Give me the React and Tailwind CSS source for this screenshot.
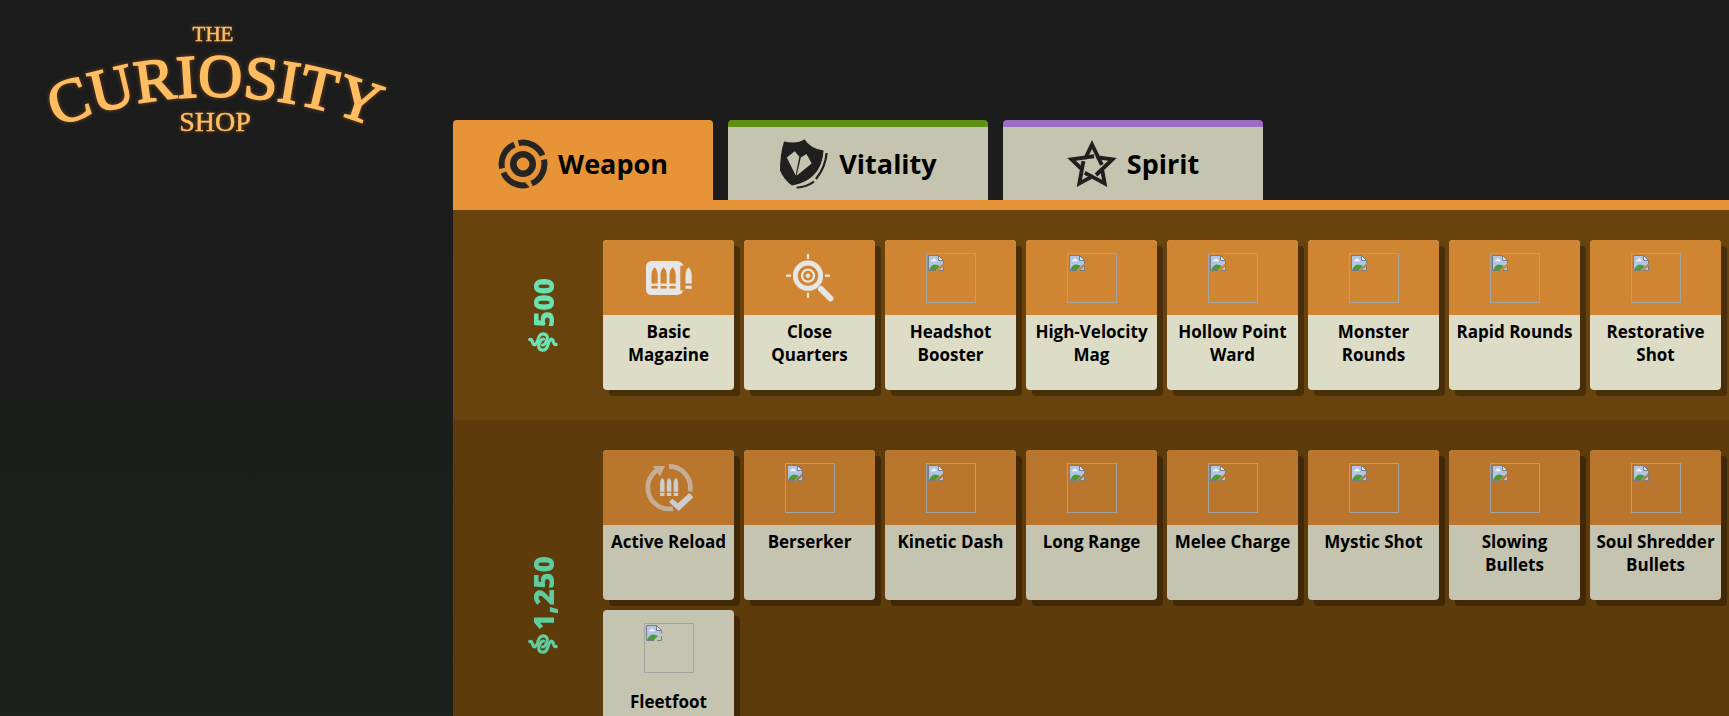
const DARK = "#1f1f1e";

function WeaponIcon() {
  return (
    <svg viewBox="0 0 50 50" className="size-[50px]" fill="none" stroke="#272522" aria-hidden="true">
      <circle cx="25" cy="25" r="9.7" strokeWidth="6.6" />
      <circle cx="25" cy="25" r="21.4" strokeWidth="6" pathLength="360" strokeDasharray="78 12" transform="rotate(-102 25 25)" />
    </svg>
  );
}

function VitalityIcon() {
  return (
    <svg viewBox="0 0 50 50" className="size-[50px]" aria-hidden="true">
      <path fill={DARK} d="M5 2.500Q18 5.500 25.500 .300Q31 9.500 44.500 11.500C44 27 36 42.500 13 46.500Q5 41 1 31.500Q1 15 5 2.500Z" />
      <path fill="#c5c4b0" d="M7.800 18.500L15.800 12.300L20.300 17.800L16.700 36.500ZM21.800 18.500L27.500 15L32.700 24.500L17.600 36.800Z" />
      <path fill="none" stroke={DARK} strokeWidth="2.200" d="M47.600 14Q46.500 28 37 40M35 42.500Q27.500 48.400 17.500 48.400" />
      <path fill="none" stroke="#c5c4b0" strokeWidth="1.200" d="M45.400 13Q43.500 28 35.500 37.500Q28 46 17 47.200" />
    </svg>
  );
}

const polar = (radius, degrees) => [
  25 + radius * Math.cos((degrees * Math.PI) / 180),
  27 + radius * Math.sin((degrees * Math.PI) / 180),
];

const starArms = [-90, -18, 54, 126, 198].map((angle) => {
  const tip = polar(21.5, angle);
  const notch = polar(10.6, angle + 36);
  const inner = [notch[0] + (notch[0] - tip[0]) * 0.58, notch[1] + (notch[1] - tip[1]) * 0.58];
  return { tip, notch, inner };
});

function SpiritIcon() {
  return (
    <svg viewBox="0 0 50 50" className="size-[50px]" fill="none" stroke={DARK} strokeWidth="3.900" strokeMiterlimit="8" aria-hidden="true">
      <path d={`M${starArms.map(({ tip, notch }) => `${tip.join(" ")} ${notch.join(" ")}`).join("L")}Z`} />
      {starArms.map(({ notch, inner }) => (
        <path key={notch.join()} d={`M${notch.join(" ")}L${inner.join(" ")}`} />
      ))}
    </svg>
  );
}

function SoulIcon() {
  return (
    <svg viewBox="0 0 30 20" className="h-5 w-[30px]" fill="none" stroke="currentColor" strokeWidth="3.200" strokeLinecap="round" strokeLinejoin="round" aria-hidden="true">
      <path d="M1.800 7.500C4 6.500 4 9 5 11.500C6.500 14.500 8.500 12 9.800 8C10.800 4 12.500 1.800 15.200 1.800C19.500 2 20 6 18.500 9C17.500 11.500 16.500 13 14.500 13" />
      <path d="M28.200 12.500C26 13.500 26 11 25 8.500C23.500 5.500 21.500 8 20.200 12C19.200 16 17.500 18.200 14.800 18.200C10.500 18 10 14 11.500 11C12.500 8.500 13.500 7 15.500 7" />
    </svg>
  );
}

function MagazineIcon() {
  return (
    <svg viewBox="0 0 50 50" className="size-[50px]" fill="#e6e6e6" fillRule="evenodd" aria-hidden="true">
      <path d="M8 8H33.500Q38 8.500 39.300 12.700H36.300V37.500H39.300Q38 41.500 33.500 42H8Q2 42 2 36V14Q2 8 8 8ZM7.500 30.500H13.700V22Q13.500 17 10.600 14.300Q7.700 17 7.500 22ZM16.500 30.500H22.700V22Q22.500 17 19.600 14.300Q16.700 17 16.500 22ZM25.500 30.500H31.700V22Q31.500 17 28.600 14.300Q25.700 17 25.500 22ZM7.500 33V35.500H13.700V33ZM16.500 33V35.500H22.700V33ZM25.500 33V35.500H31.700V33Z" />
      <path d="M41.500 30.500H47.700V22Q47.500 17 44.600 14.300Q41.700 17 41.500 22ZM41.500 32.800V35.700H47.700V32.800Z" />
    </svg>
  );
}

function MagnifierIcon() {
  return (
    <svg viewBox="0 0 50 50" className="size-[50px]" fill="none" stroke="#e6e6e6" aria-hidden="true">
      <circle cx="23" cy="22.700" r="12.700" strokeWidth="4.800" />
      <circle cx="23" cy="22.700" r="6" strokeWidth="2.300" />
      <circle cx="23" cy="22.700" r="2.200" fill="#e6e6e6" stroke="none" />
      <path strokeWidth="2.200" d="M23 1V6M23 39.700V44.700M1 22.700H6M40 22.700H45" />
      <path strokeWidth="6" strokeLinecap="round" d="M36 36L45.500 45.500" />
    </svg>
  );
}

function ReloadIcon() {
  return (
    <svg viewBox="0 0 50 50" className="size-[50px]" fill="#cdcdcd" aria-hidden="true">
      <g opacity="0.650">
        <path fill="none" stroke="#cdcdcd" strokeWidth="4.700" d="M25 3.400A21.300 21.300 0 0 1 46 28.500M29 45.600A21.300 21.300 0 0 1 12.500 7.500" />
        <path d="M9 3H21L16 13.500Z" />
      </g>
      <path d="M16 28.700H20.600V20Q20.500 16.500 18.300 14.700Q16.100 16.500 16 20ZM22.800 28.700H27.400V20Q27.300 16.500 25.100 14.700Q22.900 16.500 22.800 20ZM29.600 28.700H34.200V20Q34.100 16.500 31.900 14.700Q29.700 16.500 29.600 20ZM16 29.800V33H20.600V29.800ZM22.800 29.800V33H27.400V29.800ZM29.600 29.800V33H34.200V29.800Z" />
      <path d="M25 39L28.300 35.700L34 40.300L45.300 30L49.300 34.300L34.700 48Z" />
    </svg>
  );
}

function MissingPicture() {
  return (
    <span className="block size-[50px] border border-[#a3a3a3] p-px">
      <svg viewBox="0 0 16 16" className="size-4" aria-hidden="true">
        <path fill="#b3c5e4" d="M.500 .500H10.500L15.500 5.500V8L8 15.500H.500Z" />
        <path fill="#f1f4f8" d="M3 6.200Q3 4.800 4.500 4.800Q5 3.200 6.300 3.500Q7.600 3.600 7.700 5Q9 5 9 6.200Z" />
        <path fill="#4d9a34" d="M1 15.500Q2.500 10.500 6.500 9.500Q9.500 9.500 12 11L7.500 15.500Z" />
        <path fill="#dfe3ea" d="M10.500 .500V5.500H15.500Z" />
        <path fill="#b3c5e4" d="M11 15.500L15.500 11V15.500Z" />
        <path fill="none" stroke="#777d84" d="M8 15.500H.500V.500H10.500L15.500 5.500V8.500M10.500 .500V5.500H15.500M11 15.500H15.500V11" />
      </svg>
    </span>
  );
}

function Logo() {
  return (
    <svg viewBox="0 0 400 140" className="h-[140px] w-[400px] drop-shadow-[0_0_2px_rgba(200,110,30,0.5)]" fill="#ffbd62" stroke="#ffbd62" fontFamily="Liberation Serif, serif" textAnchor="middle" role="img" aria-label="The Curiosity Shop">
      <path id="logo-arch" fill="none" stroke="none" d="M37 135A431 431 0 0 1 393 135" />
      <text x="213" y="41" fontSize="21" strokeWidth="0.500">THE</text>
      <text fontSize="61" strokeWidth="1.800">
        <textPath href="#logo-arch" startOffset="50%">CURIOSITY</textPath>
      </text>
      <text x="215" y="131" fontSize="28" strokeWidth="0.500">SHOP</text>
    </svg>
  );
}

const tabs = [
  { name: "Weapon", Icon: WeaponIcon, style: "border-[#e79338] bg-[#e79338]", selected: true },
  { name: "Vitality", Icon: VitalityIcon, style: "border-[#5f9118] bg-[#c5c4b0]", selected: false },
  { name: "Spirit", Icon: SpiritIcon, style: "border-[#9c6cc3] bg-[#c5c4b0]", selected: false },
];

const tiers = [
  {
    price: "500",
    row: "bg-[#68430d]",
    cost: "text-[#6ae3b1]",
    head: "bg-[#cf8531]",
    card: "bg-[#dcdcc7] shadow-[6px_6px_0_#492f09]",
    items: [
      { name: "Basic Magazine", Icon: MagazineIcon },
      { name: "Close Quarters", Icon: MagnifierIcon },
      { name: "Headshot Booster" },
      { name: "High-Velocity Mag" },
      { name: "Hollow Point Ward" },
      { name: "Monster Rounds" },
      { name: "Rapid Rounds" },
      { name: "Restorative Shot" },
    ],
  },
  {
    price: "1,250",
    row: "bg-[#5d3b0b]",
    cost: "text-[#5fcb9e]",
    head: "bg-[#b9762c]",
    card: "bg-[#c5c4b0] shadow-[6px_6px_0_#412908]",
    items: [
      { name: "Active Reload", Icon: ReloadIcon },
      { name: "Berserker" },
      { name: "Kinetic Dash" },
      { name: "Long Range" },
      { name: "Melee Charge" },
      { name: "Mystic Shot" },
      { name: "Slowing Bullets" },
      { name: "Soul Shredder Bullets" },
      { name: "Fleetfoot", plain: true },
    ],
  },
];

function ItemCard({ item, tier }) {
  const Icon = item.Icon ?? MissingPicture;
  return (
    <li className={`h-[150px] w-[131px] overflow-hidden rounded ${tier.card}`}>
      <div className={`flex h-[75px] items-center justify-center ${item.plain ? "" : tier.head}`}>
        <Icon />
      </div>
      <p className="px-1 pt-[5px] text-center text-[17px] leading-[23px] font-bold text-black">{item.name}</p>
    </li>
  );
}

function Tier({ tier }) {
  return (
    <section className={`flex py-[30px] pl-[30px] ${tier.row}`}>
      <h2 className={`flex w-[120px] shrink-0 flex-col items-center justify-center gap-1 ${tier.cost}`}>
        <span className="rotate-180 text-[28px] leading-[30px] font-extrabold [writing-mode:vertical-rl]">
          {tier.price}
        </span>
        <SoulIcon />
      </h2>
      <ul className="flex flex-1 flex-wrap gap-2.5">
        {tier.items.map((item) => (
          <ItemCard key={item.name} item={item} tier={tier} />
        ))}
      </ul>
    </section>
  );
}

export default function App() {
  return (
    <div className="flex h-screen overflow-hidden bg-linear-to-b from-[#1c1c1c] from-30% to-[#1c211c] font-['Open_Sans','Noto_Sans',sans-serif]">
      <header className="w-[453px] shrink-0">
        <Logo />
      </header>
      <main className="min-w-0 flex-1 pt-[120px]">
        <div role="tablist" className="flex gap-[15px] border-b-10 border-[#e79338]">
          {tabs.map(({ name, Icon, style, selected }) => (
            <button
              key={name}
              type="button"
              role="tab"
              aria-selected={selected}
              className={`flex h-20 w-[260px] items-center justify-center gap-2.5 rounded-t border-t-7 text-[27px] leading-8 font-bold text-black ${style}`}
            >
              <Icon />
              {name}
            </button>
          ))}
        </div>
        {tiers.map((tier) => (
          <Tier key={tier.price} tier={tier} />
        ))}
      </main>
    </div>
  );
}
